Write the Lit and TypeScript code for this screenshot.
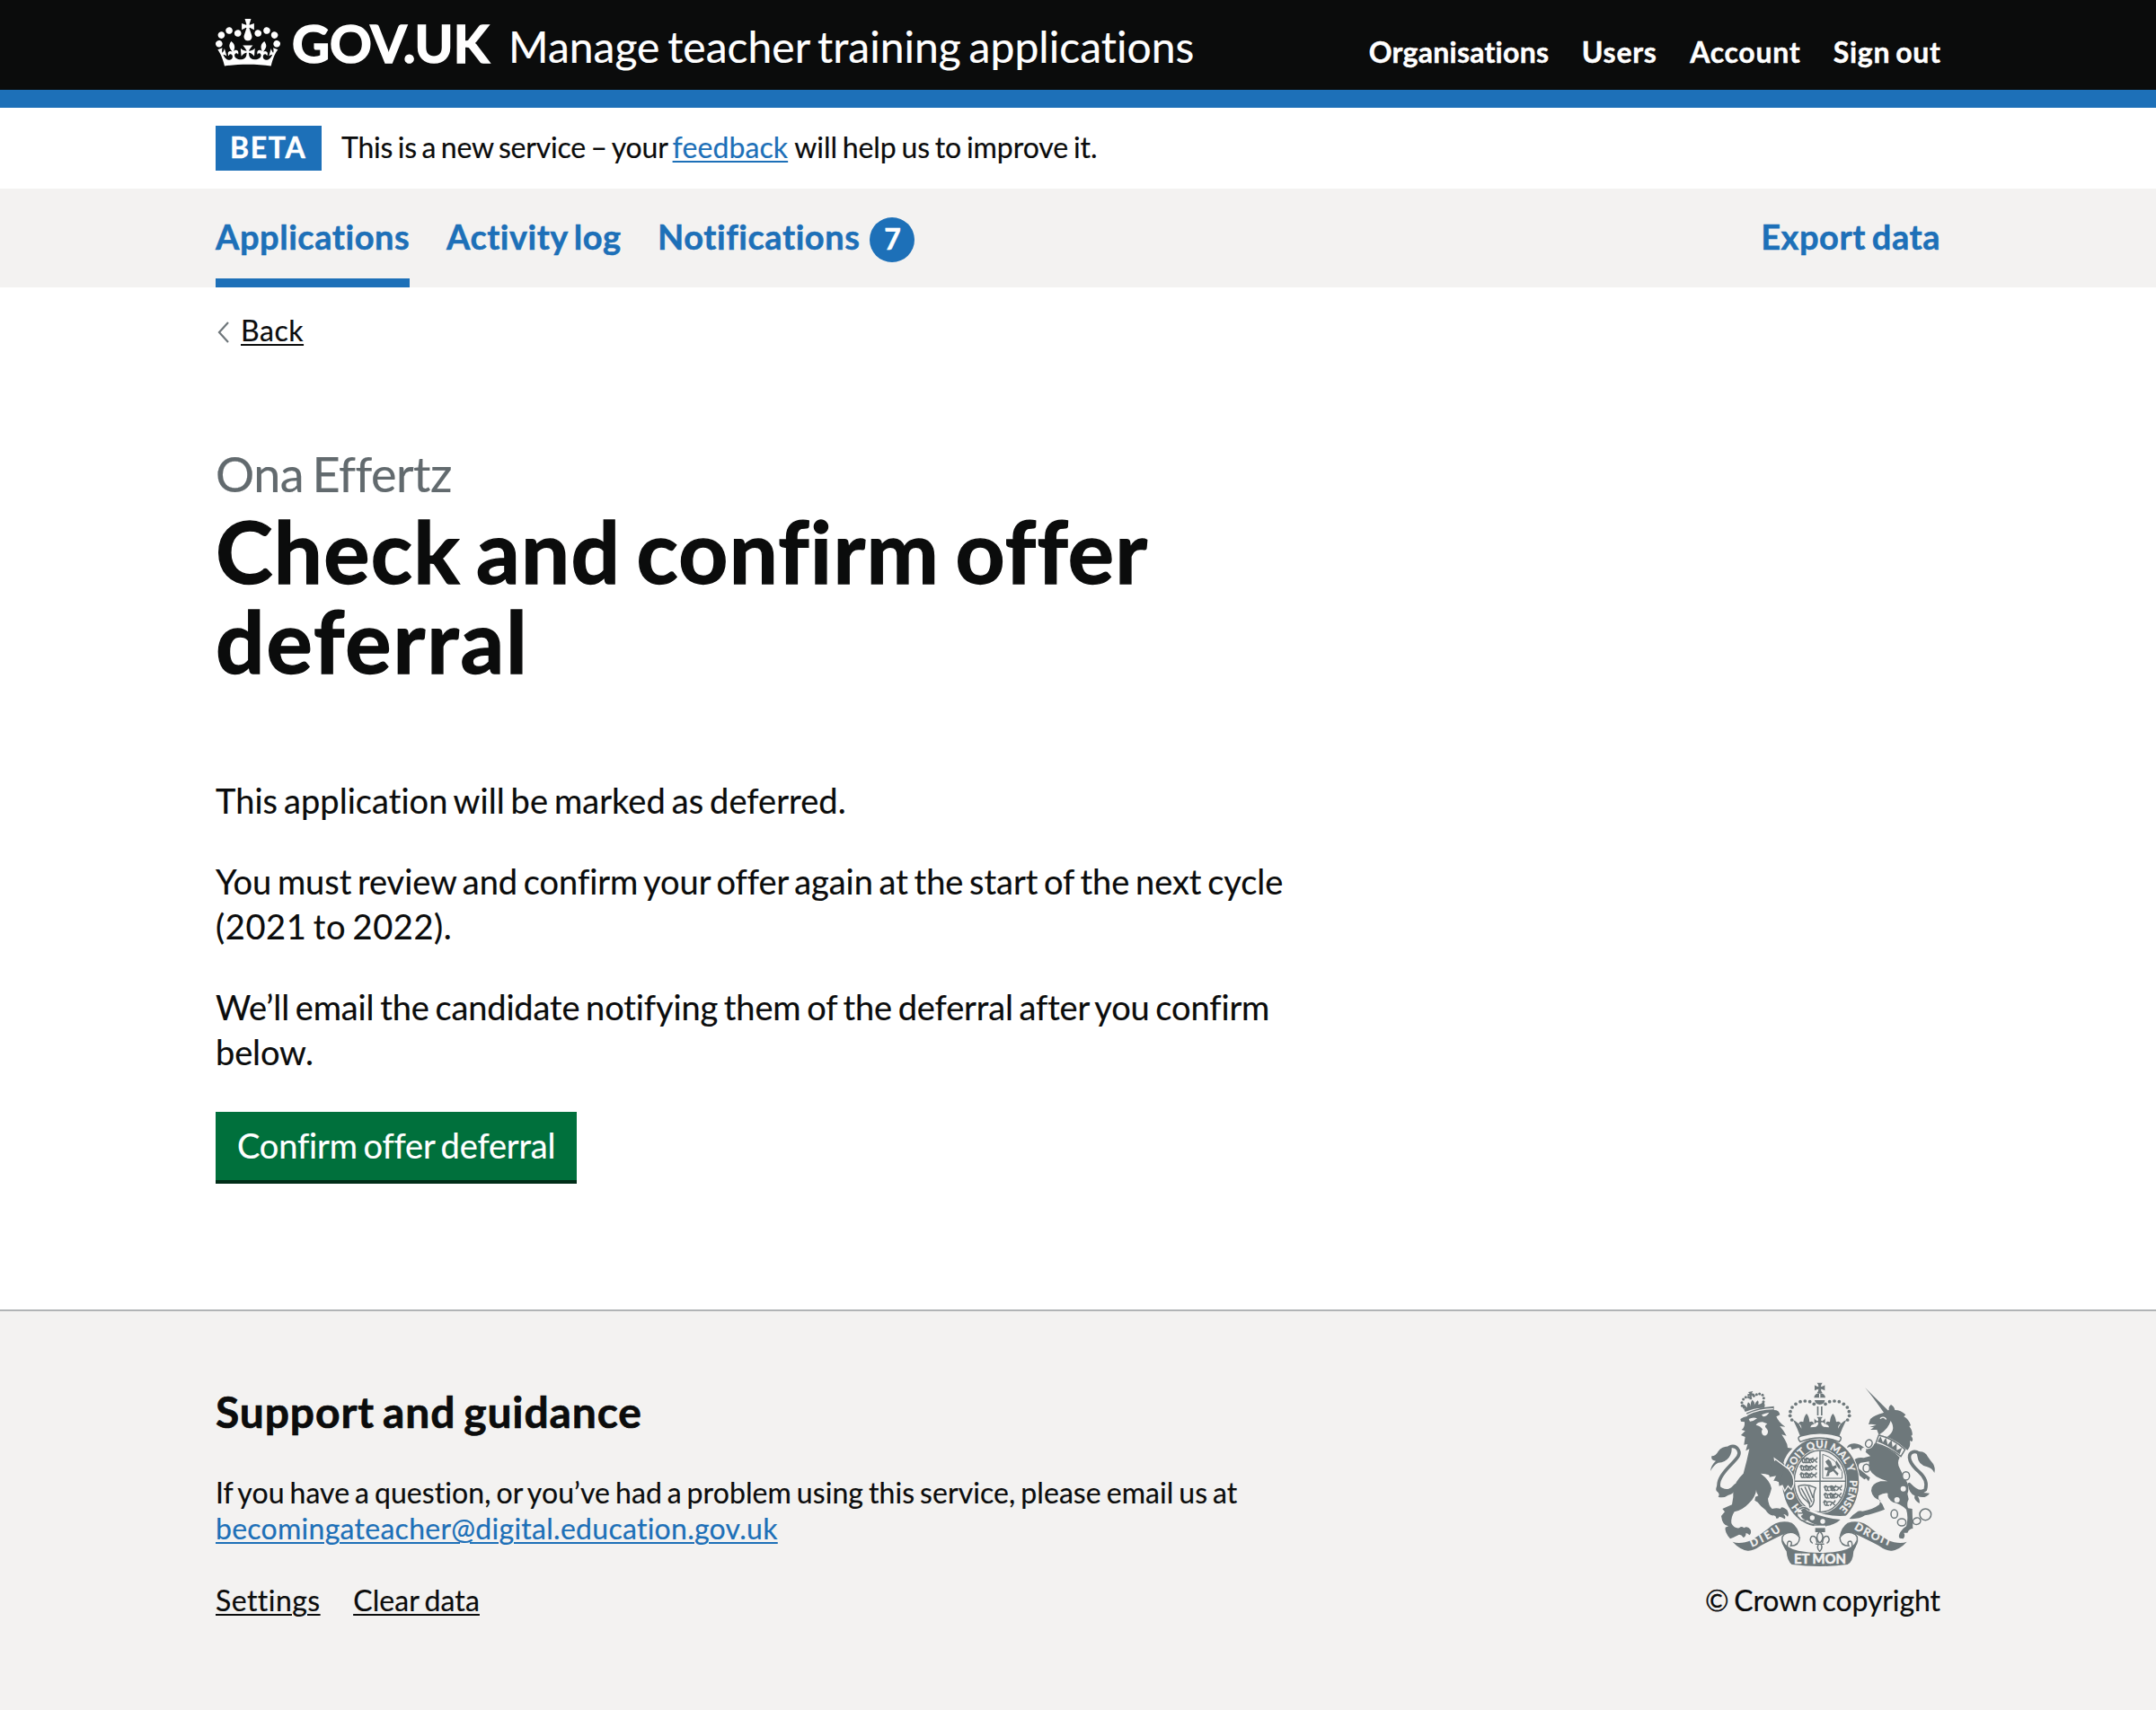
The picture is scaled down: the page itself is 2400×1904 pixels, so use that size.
import { LitElement, html, css, svg } from "lit";

/* The arms are drawn on a 3x grid; the large crown is symmetric about x = 437. */
const mirror = (x: number) => 874 - x;

const pearls: [number, number][] = [
  [418, 130], [404, 122], [388, 120], [372, 122], [357, 130], [345, 141], [339, 155], [338, 169], [344, 183],
];
const smallPearls: [number, number][] = [
  [178, 136], [177, 125], [182, 114], [190, 107], [200, 107], [217, 103], [226, 98], [236, 96], [246, 100], [250, 110], [249, 122],
];

const lionPassant = (x: number, y: number) => svg`
  <path class="g-line" d="M${x} ${y} q6 -7 11 0 q9 -5 18 1 q7 2 9 -6 M${x + 3} ${y + 2} q-1 8 5 9 M${x + 11} ${y + 1} v9 l5 1 M${x + 28} ${y + 2} q-2 6 -6 8 M${x + 31} ${y + 1} q2 7 6 8" />
  <circle class="g" cx="${x + 4}" cy="${y - 3}" r="4" />`;

class RoyalArms extends LitElement {
  static styles = css`
    :host { display: block; width: 254px; height: 210px; }
    svg { display: block; width: 100%; height: 100%; overflow: visible; }
    .g { fill: #6e787b; }
    .b { fill: #f3f2f1; }
    .g-line { fill: none; stroke: #6e787b; stroke-width: 4.5; stroke-linecap: round; stroke-linejoin: round; }
    .thin { stroke-width: 3; }
    .ring { fill: #f3f2f1; stroke: #6e787b; stroke-width: 4.5; }
    .b-line { fill: none; stroke: #f3f2f1; stroke-width: 4; stroke-linecap: round; }
    .arm { fill: #6e787b; stroke: #f3f2f1; stroke-width: 4; }
    .tail { fill: none; stroke: #6e787b; stroke-width: 11; stroke-linecap: round; }
    text { fill: #f3f2f1; font-family: Lato, sans-serif; font-weight: 700; stroke: #f3f2f1; stroke-width: 0.8; word-spacing: 0; letter-spacing: 0; }
    .motto { font-size: 36px; }
    .mon { font-size: 46px; stroke-width: 1.6; }
    .garter { font-size: 34px; }
  `;

  render() {
    return html`<svg viewBox="66 54 762 630" role="img">
      <defs>
        <path id="p-dieu" d="M210 608 Q262 588 316 549" />
        <path id="p-droit" d="M551 547 Q602 579 680 608" />
        <path id="p-soit" d="M348 355 A97 115 0 0 1 533 359" />
        <path id="p-pense" d="M537 384 A97 115 0 0 1 500 482" />
        <path id="p-honi" d="M377 480 A97 115 0 0 1 345 408" />
      </defs>

      <!-- lion -->
      <path class="tail" d="M156 402 Q132 430 106 421 Q88 396 118 358 C146 322 178 305 165 283 Q155 266 135 274" />
      <path class="g" d="M72 354 Q74 334 90 320 Q72 318 76 304 Q90 304 98 288 Q110 270 142 272 Q146 290 134 308 Q122 324 98 326 Q82 334 72 354z M96 400 Q88 412 92 420 Q106 430 98 440 Q116 446 132 434 Q146 434 158 412 L140 412 Q118 420 96 400z" />
      <path class="g" d="M172 180 Q182 172 196 170 L192 160 Q235 140 280 138 L284 137 L284 150 Q302 150 304 166 L292 172 Q300 192 322 206 L304 204 Q318 220 326 236 L310 232 Q322 250 328 264 L330 276 L346 278 Q322 300 316 326 L346 374 Q352 398 342 412 Q334 422 324 402 Q330 414 314 420 Q316 408 310 400 L300 406 Q304 394 300 386 L282 386 Q298 376 292 370 L268 374 Q276 364 240 362 Q272 386 276 412 Q270 436 264 446 Q266 470 278 480 Q294 476 306 480 Q308 468 328 484 Q336 500 330 506 Q322 496 316 498 Q326 508 320 514 Q308 506 302 506 Q300 514 292 512 Q292 504 284 502 Q268 504 256 484 Q238 470 230 458 L220 452 L222 440 L232 436 Q222 420 226 410 Q224 440 200 462 Q180 484 152 490 Q140 508 142 528 Q150 546 168 544 Q176 536 184 544 Q196 536 206 550 Q210 562 202 568 Q196 560 190 562 Q192 572 182 576 Q176 566 168 566 Q156 572 148 576 L138 580 Q118 556 122 542 L132 538 Q112 536 108 504 L120 490 L112 480 L144 466 Q150 440 148 420 Q152 390 182 362 Q194 320 202 280 L190 286 L196 264 L184 266 L188 240 L174 234 L188 220 L176 216 Q188 208 186 190 L174 188z" />
      <path class="b" d="M200 180 Q215 172 228 178 Q216 188 204 188z M243 166 Q256 160 268 158 Q262 170 248 172z M224 200 Q230 190 246 190 L262 196 Q250 204 258 210 Q268 220 262 230 Q254 240 246 232 Q240 222 246 214 Q240 204 224 200z" />
      <path class="b-line thin" d="M194 166 Q235 146 280 146" />
      <path class="g" d="M184 148 Q218 128 254 134 L252 143 Q220 142 188 156z M182 146 Q176 136 180 130 Q190 134 194 142 Q194 130 198 124 Q206 128 206 138 Q206 122 212 116 Q222 124 218 134 Q224 122 230 118 Q236 124 232 132 Q242 130 248 122 Q256 128 252 138z M198 90 L214 87 L210 94 L219 96 L217 103 L209 101 L211 115 L202 115 L204 103 L196 104 L196 97 L203 96z" />
      ${smallPearls.map(([x, y]) => svg`<circle class="g" cx="${x}" cy="${y}" r="4.6" />`)}

      <!-- unicorn -->
      <path class="tail" d="M736 398 Q770 434 790 416 Q800 384 768 356 C738 330 728 304 744 292 Q756 286 768 294" />
      <path class="g" d="M760 290 Q788 284 798 306 Q806 318 816 330 Q824 344 820 360 Q812 344 796 340 Q766 332 764 308z M732 400 Q736 430 754 436 Q750 450 770 462 Q772 448 764 438 Q790 448 804 428 Q780 428 762 420z" />
      <path class="g" d="M588 75 L666 152 L654 163 Q610 100 588 75z" />
      <path class="g" d="M600 198 L606 180 Q622 166 648 160 L668 150 Q666 138 675 132 Q686 138 688 150 Q708 150 724 166 L718 172 Q736 182 741 202 L736 204 Q748 220 746 234 L742 236 Q752 248 744 256 L738 252 Q742 272 730 284 L722 278 Q680 240 634 232 L628 216 L606 216 L618 208 L604 206 L626 200 Q612 196 600 198z" />
      <path class="b-line" d="M640 178 Q650 170 658 180" />
      <path class="b" d="M636 232 Q666 214 674 186 Q694 218 662 240z" />
      <path class="ring" d="M634 234 Q680 244 722 282 L708 305 Q672 276 624 262z" />
      <path class="g" d="M630 256 L640 238 L648 258 L658 242 L664 266 L677 250 L680 274 L694 262 L694 284 L712 276 L704 298 Q668 270 630 256z" />
      <path class="g" d="M620 262 Q674 276 704 308 Q694 326 704 344 Q714 366 726 386 Q738 406 730 430 L734 448 Q726 464 732 478 L746 480 L748 546 Q736 546 730 560 L718 560 Q724 570 716 580 L704 578 Q698 572 706 558 Q716 544 726 538 Q734 508 726 482 Q706 462 682 458 Q662 446 664 428 Q650 426 634 436 Q630 450 646 464 L654 482 Q612 498 588 502 Q566 516 536 513 Q546 500 560 492 Q566 484 580 488 Q612 484 636 466 L640 452 Q614 446 609 420 Q608 396 640 388 L664 388 Q614 372 605 350 Q600 330 602 322 L574 326 Q564 330 568 346 L590 364 L605 376 L600 388 L592 378 L586 382 L574 372 Q552 356 553 340 L546 322 Q560 306 584 310 L606 304 L590 290 Q572 290 568 276 L544 282 L540 272 L528 276 Q530 264 550 262 Q570 260 590 280 Q610 284 620 262z" />
      <ellipse class="ring" cx="601" cy="262" rx="11" ry="13" transform="rotate(20 601 262)" />
      <circle class="b" cx="584" cy="284" r="8" />
      <ellipse class="ring" cx="593" cy="344" rx="11" ry="13" />
      <ellipse class="ring" cx="725" cy="370" rx="12" ry="14" />
      <circle class="b" cx="716" cy="413" r="9" /><circle class="b" cx="695" cy="450" r="9" />
      <ellipse class="ring" cx="686" cy="497" rx="11" ry="14" />
      <ellipse class="ring" cx="711" cy="525" rx="14" ry="12" />
      <ellipse class="ring" cx="761" cy="521" rx="13" ry="11" transform="rotate(-20 761 521)" />
      <circle class="ring" cx="790" cy="499" r="19" />

      <!-- garter and shield -->
      <ellipse class="b" cx="440" cy="391" rx="131" ry="152" />
      <ellipse class="g" cx="440" cy="391" rx="128" ry="149" />
      <ellipse class="b" cx="438" cy="388" rx="90" ry="108" />
      <ellipse class="g-line" cx="438" cy="388" rx="86" ry="103" />
      <path class="g-line" d="M438 287 V490 M354 388 H522" />
      ${[[376, 315], [372, 340], [372, 365], [390, 315], [388, 340], [388, 365]].map(([x, y]) => lionPassant(x, y))}
      ${[[452, 408], [452, 433], [450, 458], [472, 408], [470, 433]].map(([x, y]) => lionPassant(x, y))}
      <path class="g-line thin" d="M448 298 Q492 312 512 356 V378 H448z" />
      <path class="g" d="M456 322 L466 314 L474 322 L480 338 L492 334 L494 342 L486 348 L500 362 L496 370 L482 354 L470 360 L468 370 L458 372 L464 352 L454 350 L454 342 L468 340 L460 330z M492 318 L506 338 L502 348 L490 330z" />
      <path class="g-line" d="M366 404 Q392 394 424 410 Q414 432 418 452 Q414 472 404 474 Q404 462 396 456 Q370 438 366 404z M376 412 L404 462 M388 408 L410 456 M400 406 L414 442" />
      <text class="garter"><textPath href="#p-soit" textLength="262">SOIT QUI MAL Y</textPath></text>
      <text class="garter"><textPath href="#p-pense" textLength="106">PENSE</textPath></text>
      <text class="garter"><textPath href="#p-honi" textLength="68">HO</textPath></text>
      <path class="arm" d="M286 312 L334 348 Q354 372 350 398 L342 416 L331 404 L320 421 L312 402 L300 407 L296 372z" />
      <path class="g" d="M270 330 L290 318 L316 350 L304 392 L284 384 L292 368z" />
      <path class="b" d="M366 478 Q384 464 402 478 Q462 512 538 502 L510 530 Q440 545 382 520 Q356 510 366 478z" />
      <path class="g" d="M374 484 Q386 474 396 486 Q452 512 506 516 Q486 536 446 538 Q416 534 392 516 Q380 518 374 504 L382 498z" />
      <path class="g-line" d="M370 480 Q386 470 402 484 M366 508 Q376 524 392 518 M366 494 h18" />
      <circle class="b" cx="412" cy="510" r="8" /><circle class="b" cx="447" cy="522" r="8" />

      <!-- crown -->
      <path class="b" d="M336 180 L362 248 H512 L540 180z" />
      <path class="g" d="M348 183 Q366 190 376 212 Q376 198 366 196 Q370 184 382 190 Q384 172 393 162 Q402 172 403 190 Q416 184 417 198 Q408 198 406 208 L424 206 Q434 200 432 191 Q424 188 419 199 V178 Q426 190 432 185 Q434 178 427 173 H447 Q440 178 442 185 Q448 190 455 178 V199 Q450 188 442 191 Q440 200 450 206 L468 208 Q466 198 457 198 Q458 184 471 190 Q472 172 481 162 Q490 172 492 190 Q504 184 508 196 Q498 198 498 212 Q508 190 526 183 Q512 210 502 238 Q437 216 372 238 Q362 210 348 183z" />
      <path class="ring" d="M372 256 Q358 240 376 236 Q437 218 498 236 Q516 240 502 256 Q437 230 372 256z" />
      ${pearls.map(([x, y]) => svg`<circle class="g" cx="${x}" cy="${y}" r="5.6" /><circle class="g" cx="${mirror(x)}" cy="${y}" r="5.6" />`)}
      <path class="g" d="M428 138 h5 v30 h-5z M441 138 h5 v30 h-5z M418 109 Q420 94 437 93 Q454 94 456 109z M420 117 H454 Q454 131 437 132 Q422 131 420 117z M428 59 h18 q-5 6 -5 13 q7 0 13 -5 v18 q-6 -5 -13 -5 q0 7 5 13 h-18 q5 -6 5 -13 q-7 0 -13 5 v-18 q6 5 13 5 q0 -7 -5 -13z" />
      <path class="b" d="M435 95 h4 v14 h-4z" />

      <!-- ribbon -->
      ${["", "translate(874 0) scale(-1 1)"].map(
        (t) => svg`<g transform="${t}">
          <path class="b" d="M140 584 Q205 582 250 545 Q300 506 350 518 Q380 540 376 580z" />
          <path class="g" d="M146 590 Q172 600 210 584 Q236 568 262 548 Q300 512 344 527 Q364 540 371 572 Q346 550 318 564 Q264 590 240 603 Q214 622 196 620 Q170 616 146 590z" />
          <path class="ring" d="M318 566 Q348 548 370 576 Q368 604 340 604 Q348 588 334 588 Q326 590 330 616 Q308 600 312 574z" />
        </g>`,
      )}
      <path class="g" d="M314 584 Q324 612 366 620 Q437 634 508 620 Q550 612 560 584 Q562 604 550 622 Q548 658 530 666 Q437 678 344 666 Q328 654 326 622 Q312 604 314 584z" />
      <path class="b" d="M418 536 h38 v8 h-38z" /><path class="g" d="M422 544 h33 v14 h-33z" />
      <path class="g-line" d="M437 554 Q420 574 434 592 H440 Q456 574 437 554z M428 592 Q426 568 410 572 Q400 584 412 594 M446 592 Q448 568 464 572 Q474 584 462 594 M424 598 H450 M432 600 Q426 612 437 622 Q448 612 442 600" />
      <text class="motto"><textPath href="#p-dieu" textLength="112">DIEU</textPath></text>
      <text class="motto"><textPath href="#p-droit" textLength="134">DROIT</textPath></text>
      <text class="mon" x="351" y="663" textLength="174" lengthAdjust="spacingAndGlyphs">ET MON</text>
    </svg>`;
  }
}
customElements.define("royal-arms", RoyalArms);

class AppRoot extends LitElement {
  static styles = css`
    :host {
      display: block; min-height: 1904px; background: #fff; color: #0b0c0c;
      font-family: Lato, "Liberation Sans", sans-serif; font-size: 32px; line-height: 40px;
      font-variant-ligatures: none; -webkit-text-stroke: 0.006em currentColor;
    }
    * { box-sizing: border-box; word-spacing: -0.075em; }
    p, h1, h2 { margin: 0; font-weight: 400; }
    a { color: inherit; text-decoration: none; }
    .wrap { width: 1920px; margin: 0 auto; display: flex; }
    .bold { font-weight: 700; -webkit-text-stroke-width: 0.014em; }
    .u { text-decoration: underline; text-decoration-thickness: 2px; text-underline-offset: 3px; }
    .blue { color: #1d70b8; }
    .nw { white-space: nowrap; }

    .header { height: 120px; background: #0b0c0c; border-bottom: 20px solid #1d70b8; color: #fff; }
    .header .wrap { height: 100px; padding-top: 18px; align-items: baseline; }
    .crown { width: 72px; height: 53px; margin-right: 13px; align-self: flex-start; margin-top: 3px; }
    .logo { font-size: 58px; line-height: 60px; -webkit-text-stroke-width: 1.6px; width: 241px; }
    .service { font-size: 48px; line-height: 60px; letter-spacing: 0.03px; }
    .links { display: flex; gap: 36.5px; margin-left: auto; }
    .l1 { letter-spacing: 0.25px; } .l2 { letter-spacing: 0.75px; } .l3 { letter-spacing: 0.7px; } .l4 { letter-spacing: 0.7px; margin-right: -0.7px; }

    .phase { height: 90px; padding-top: 20px; align-items: baseline; }
    .tag { width: 118px; height: 50px; padding-left: 16px; line-height: 47px; background: #1d70b8; color: #fff; letter-spacing: 1.7px; margin-right: 22px; }
    .ph1 { letter-spacing: -0.2px; } .ph2 { letter-spacing: 0.1px; margin: 0 7px 0 5px; } .ph3 { letter-spacing: -0.05px; }

    .nav { height: 110px; background: #f3f2f1; font-size: 38px; line-height: 50px; }
    .nav .wrap { height: 110px; padding-top: 28px; color: #1d70b8; }
    .tab { height: 82px; margin-right: 41px; letter-spacing: 0.55px; }
    .on { border-bottom: 10px solid #1d70b8; width: 216px; }
    .t2 { width: 194px; letter-spacing: 0.5px; }
    .t3 { margin-right: 11px; }
    .count { width: 50px; height: 50px; margin-top: 4px; border-radius: 50%; background: #1d70b8; color: #fff; font-size: 32px; line-height: 47px; text-align: center; }
    .export { margin-left: auto; letter-spacing: 0.55px; }

    .back { padding-top: 28px; align-items: flex-start; letter-spacing: 0.55px; }
    .chev { width: 28px; height: 24px; margin-top: 10px; }

    .main { flex-direction: column; align-items: flex-start; padding-top: 110px; height: 1070px; font-size: 38px; line-height: 50px; }
    .caption { font-size: 54px; line-height: 60px; color: #626a6e; letter-spacing: -0.5px; margin-bottom: 5px; }
    h1 { font-size: 96px; line-height: 100px; letter-spacing: 1.25px; margin-bottom: 103px; }
    .h1b { letter-spacing: 2px; }
    .main p { margin-bottom: 40px; letter-spacing: -0.06px; }
    .main .p1 { letter-spacing: 0.05px; }
    .years { letter-spacing: 0.6px; }
    .main .last { margin-bottom: 42px; letter-spacing: -0.13px; }
    .button { height: 80px; width: 402px; padding: 12px 0 0 24px; background: #00703c; color: #fff; border-bottom: 4px solid #002d18; letter-spacing: -0.17px; }

    .footer { height: 446px; background: #f3f2f1; border-top: 2px solid #b1b4b6; letter-spacing: 0.08px; }
    .footer .wrap { justify-content: space-between; padding-top: 78px; }
    h2 { font-size: 48px; line-height: 60px; letter-spacing: 0.88px; margin: 4px 0 40px; }
    .mail { letter-spacing: 0.27px; }
    .meta { display: flex; gap: 36.5px; margin-top: 40px; }
    .set { letter-spacing: 0.45px; } .clr { letter-spacing: 0.13px; }
    .side { width: 262px; padding-left: 4px; }
    .copy { margin: 14px 0 0 -4px; letter-spacing: -0.1px; }
  `;

  render() {
    return html`
      <header class="header">
        <div class="wrap">
          <svg class="crown" viewBox="0 0 132 97" fill="#fff">
            <path fill-rule="evenodd" d="M25 30.2c3.5 1.5 7.7-.2 9.1-3.7 1.5-3.6-.2-7.8-3.9-9.2-3.6-1.4-7.6.3-9.1 3.9-1.4 3.5.3 7.5 3.9 9zM9 39.5c3.6 1.5 7.8-.2 9.2-3.7 1.5-3.6-.2-7.8-3.9-9.1-3.6-1.5-7.6.2-9.1 3.8-1.4 3.5.3 7.5 3.8 9zM4.4 57.2c3.5 1.5 7.7-.2 9.1-3.8 1.5-3.6-.2-7.7-3.9-9.1-3.5-1.5-7.6.3-9.1 3.8-1.4 3.5.3 7.6 3.9 9.1zm38.3-21.4c3.5 1.5 7.7-.2 9.1-3.8 1.5-3.6-.2-7.7-3.9-9.1-3.6-1.5-7.6.3-9.1 3.8-1.3 3.6.4 7.7 3.9 9.1zm64.4-5.6c-3.6 1.5-7.8-.2-9.1-3.7-1.5-3.6.2-7.8 3.8-9.2 3.6-1.4 7.7.3 9.2 3.9 1.3 3.5-.4 7.5-3.9 9zm15.9 9.3c-3.6 1.5-7.7-.2-9.1-3.7-1.5-3.6.2-7.8 3.7-9.1 3.6-1.5 7.7.2 9.2 3.8 1.5 3.5-.3 7.5-3.8 9zm4.7 17.7c-3.6 1.5-7.8-.2-9.2-3.8-1.5-3.6.2-7.7 3.9-9.1 3.6-1.5 7.7.3 9.2 3.8 1.3 3.5-.4 7.6-3.9 9.1zM89.3 35.8c-3.6 1.5-7.8-.2-9.2-3.8-1.4-3.6.2-7.7 3.9-9.1 3.6-1.5 7.7.3 9.2 3.8 1.4 3.6-.3 7.7-3.9 9.1zM69.7 17.7l8.9 4.7V9.3l-8.9 2.8c-.2-.3-.5-.6-.9-.9L72.4 0H59.6l3.5 11.2c-.3.3-.6.5-.9.9l-8.8-2.8v13.1l8.8-4.7c.3.3.6.7.9.9l-5 15.4v.1c-.2.8-.4 1.6-.4 2.4 0 4.1 3.1 7.5 7 8.1h.2c.3 0 .7.1 1 .1.4 0 .7 0 1-.1h.2c4-.6 7.1-4.1 7.1-8.1 0-.8-.1-1.7-.4-2.4V34l-5.1-15.4c.4-.2.7-.6 1-.9zM66 92.8c16.9 0 32.8 1.1 47.1 3.2 4-16.9 8.9-26.7 14-33.5l-9.6-3.4c1 4.9 1.1 7.2 0 10.2-1.5-1.4-3-4.3-4.2-8.7L108.6 76c2.8-2 5-3.2 7.5-3.3-4.4 9.4-10 11.9-13.6 11.2-4.3-.8-6.3-4.6-5.6-7.9 1-4.7 5.7-5.9 8-.5 4.3-8.7-3-11.4-7.6-8.8 7.1-7.2 7.9-13.5 2.1-21.1-8 6.1-8.1 12.3-4.5 20.8-4.7-5.4-12.1-2.5-9.5 6.2 3.4-5.2 7.9-2 7.2 3.1-.6 4.3-6.4 7.8-13.5 7.2-10.3-.9-10.9-8-11.2-13.8 2.5-.5 7.1 1.8 11 7.3L80.2 60c-4.1 4.4-8 5.3-12.3 5.4 1.4-4.4 8-11.6 8-11.6H55.5s6.4 7.2 7.9 11.6c-4.2-.1-8-1-12.3-5.4l1.4 16.4c3.9-5.5 8.5-7.7 10.9-7.3-.3 5.8-.9 12.8-11.1 13.8-7.2.6-12.9-2.9-13.5-7.2-.7-5 3.8-8.3 7.1-3.1 2.7-8.7-4.6-11.6-9.4-6.2 3.7-8.5 3.6-14.7-4.6-20.8-5.8 7.6-5 13.9 2.2 21.1-4.7-2.6-11.9.1-7.7 8.8 2.3-5.5 7.1-4.2 8.1.5.7 3.3-1.3 7.1-5.7 7.9-3.5.7-9-1.8-13.5-11.2 2.5.1 4.7 1.3 7.5 3.3l-4.7-15.4c-1.2 4.4-2.7 7.2-4.3 8.7-1.1-3-.9-5.3 0-10.2l-9.5 3.4c5 6.9 9.9 16.7 14 33.5 14.8-2.1 30.8-3.2 47.7-3.2z" />
          </svg>
          <a class="logo bold">GOV.UK</a>
          <a class="service nw">Manage teacher training applications</a>
          <nav class="links bold nw">
            <a class="l1">Organisations</a><a class="l2">Users</a><a class="l3">Account</a><a class="l4">Sign out</a>
          </nav>
        </div>
      </header>
      <div class="wrap phase nw">
        <strong class="tag bold">BETA</strong>
        <span class="ph1">This is a new service – your</span><a class="ph2 u blue">feedback</a><span class="ph3">will help us to improve it.</span>
      </div>
      <div class="nav bold">
        <div class="wrap nw">
          <a class="tab on">Applications</a><a class="tab t2">Activity log</a><a class="tab t3">Notifications</a>
          <span class="count">7</span><a class="export">Export data</a>
        </div>
      </div>
      <div class="wrap back">
        <svg class="chev" viewBox="0 0 28 24"><path d="M14 1 4 12l10 11" fill="none" stroke="#6f777b" stroke-width="2.2" /></svg>
        <a class="u">Back</a>
      </div>
      <main class="wrap main nw">
        <span class="caption">Ona Effertz</span>
        <h1 class="bold">Check and confirm offer<br /><span class="h1b">deferral</span></h1>
        <p class="p1">This application will be marked as deferred.</p>
        <p>You must review and confirm your offer again at the start of the next cycle<br /><span class="years">(2021 to 2022).</span></p>
        <p class="last">We’ll email the candidate notifying them of the deferral after you confirm<br />below.</p>
        <a class="button">Confirm offer deferral</a>
      </main>
      <footer class="footer">
        <div class="wrap nw">
          <div>
            <h2 class="bold">Support and guidance</h2>
            <p>If you have a question, or you’ve had a problem using this service, please email us at<br /><a class="u blue mail">becomingateacher@digital.education.gov.uk</a></p>
            <div class="meta"><a class="u set">Settings</a><a class="u clr">Clear data</a></div>
          </div>
          <div class="side">
            <royal-arms></royal-arms>
            <p class="copy">© Crown copyright</p>
          </div>
        </div>
      </footer>
    `;
  }
}
customElements.define("app-root", AppRoot);
